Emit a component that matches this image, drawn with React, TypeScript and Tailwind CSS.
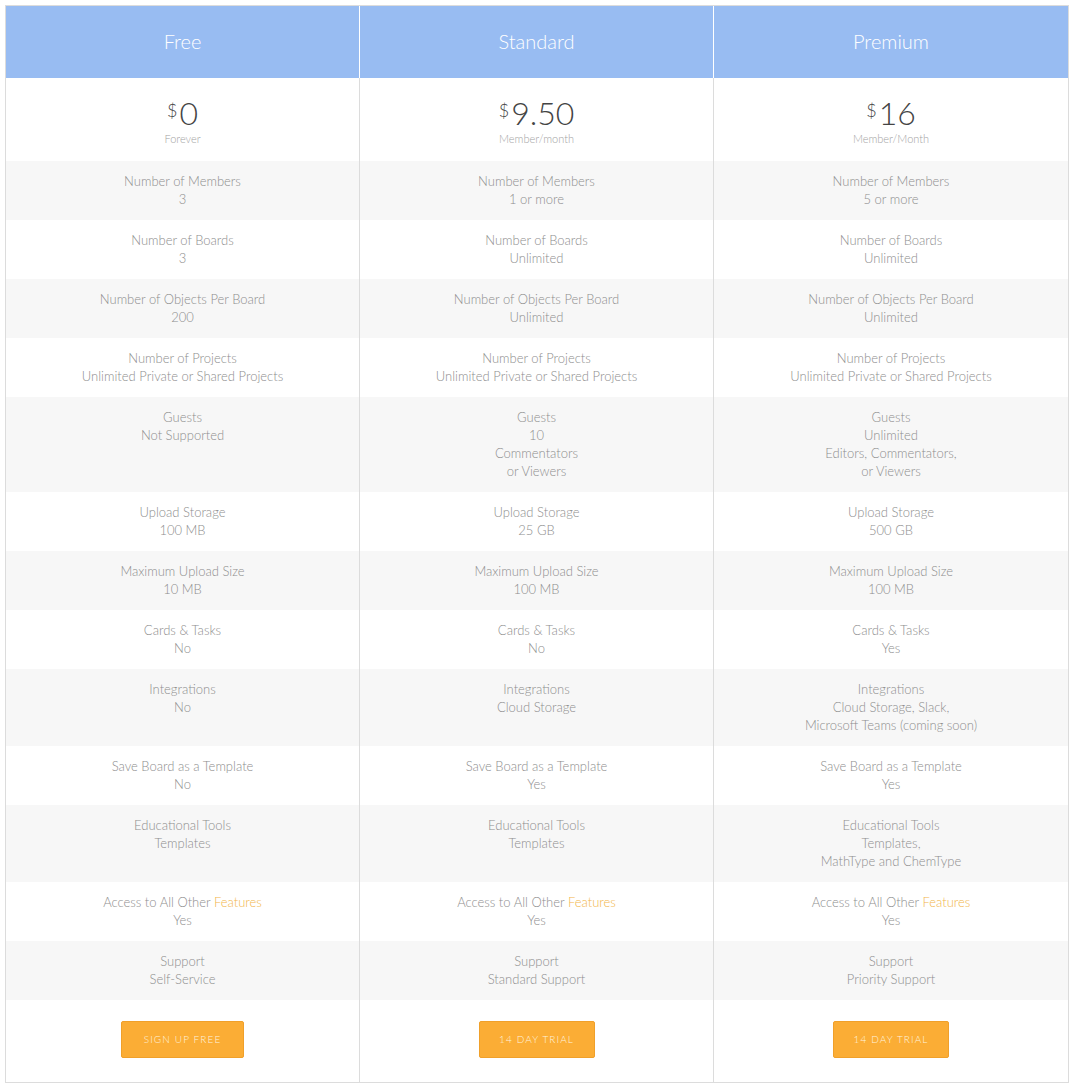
import React from "react";

type Plan = {
  name: string;
  price: string;
  period: string;
  cta: string;
  btnWidth: string;
};

const plans: Plan[] = [
  { name: "Free", price: "0", period: "Forever", cta: "Sign up free", btnWidth: "w-[123px]" },
  { name: "Standard", price: "9.50", period: "Member/month", cta: "14 day trial", btnWidth: "w-[116px]" },
  { name: "Premium", price: "16", period: "Member/Month", cta: "14 day trial", btnWidth: "w-[116px]" },
];

type Row = { label: React.ReactNode; values: string[][] };

const features = (
  <>
    Access to All Other <span className="text-[#f2b64a]">Features</span>
  </>
);

const rows: Row[] = [
  { label: "Number of Members", values: [["3"], ["1 or more"], ["5 or more"]] },
  { label: "Number of Boards", values: [["3"], ["Unlimited"], ["Unlimited"]] },
  { label: "Number of Objects Per Board", values: [["200"], ["Unlimited"], ["Unlimited"]] },
  {
    label: "Number of Projects",
    values: [["Unlimited Private or Shared Projects"], ["Unlimited Private or Shared Projects"], ["Unlimited Private or Shared Projects"]],
  },
  {
    label: "Guests",
    values: [["Not Supported"], ["10", "Commentators", "or Viewers"], ["Unlimited", "Editors, Commentators,", "or Viewers"]],
  },
  { label: "Upload Storage", values: [["100 MB"], ["25 GB"], ["500 GB"]] },
  { label: "Maximum Upload Size", values: [["10 MB"], ["100 MB"], ["100 MB"]] },
  { label: "Cards & Tasks", values: [["No"], ["No"], ["Yes"]] },
  {
    label: "Integrations",
    values: [["No"], ["Cloud Storage"], ["Cloud Storage, Slack,", "Microsoft Teams (coming soon)"]],
  },
  { label: "Save Board as a Template", values: [["No"], ["Yes"], ["Yes"]] },
  {
    label: "Educational Tools",
    values: [["Templates"], ["Templates"], ["Templates,", "MathType and ChemType"]],
  },
  { label: features, values: [["Yes"], ["Yes"], ["Yes"]] },
  { label: "Support", values: [["Self-Service"], ["Standard Support"], ["Priority Support"]] },
];

export default function App() {
  return (
    <div className="min-h-[1086px] bg-white pl-[5px] pt-[5px] font-['Lato','Open_Sans',sans-serif] font-light">
      <div className="w-[1064px] border border-[#dcdcdc] text-[13px] leading-[18px] text-[#8e8e8e]">
        <div className="grid grid-cols-3 bg-[#98bcf2]">
          {plans.map((p, i) => (
            <div
              key={p.name}
              className={`flex h-[72px] items-center justify-center pb-[2px] text-[20px] font-light text-white ${i < 2 ? "border-r border-white" : ""}`}
            >
              {p.name}
            </div>
          ))}
        </div>

        <div className="grid grid-cols-3">
          {plans.map((p, i) => (
            <div
              key={p.name}
              className={`flex h-[83px] flex-col items-center pt-[18px] ${i < 2 ? "border-r border-[#dcdcdc]" : ""}`}
            >
              <div className="flex items-start text-[#444]">
                <span className="mt-[4px] mr-[2px] text-[18px] leading-[20px] font-light">$</span>
                <span className="text-[32px] leading-[34px] font-light">{p.price}</span>
              </div>
              <div className="mt-[2px] text-[11px] leading-[14px] text-[#a3a3a3]">{p.period}</div>
            </div>
          ))}
        </div>

        {rows.map((r, ri) => (
          <div key={ri} className="grid grid-cols-3">
            {r.values.map((v, ci) => (
              <div
                key={ci}
                className={`pt-[11px] pb-[12px] text-center ${ri % 2 === 0 ? "bg-[#f7f7f7]" : "bg-white"} ${ci < 2 ? "border-r border-[#dcdcdc]" : ""}`}
              >
                <div>{r.label}</div>
                {v.map((line, li) => (
                  <div key={li}>{line}</div>
                ))}
              </div>
            ))}
          </div>
        ))}

        <div className="grid grid-cols-3">
          {plans.map((p, i) => (
            <div
              key={p.name}
              className={`flex h-[82px] items-center justify-center pb-[4px] ${i < 2 ? "border-r border-[#dcdcdc]" : ""}`}
            >
              <button
                type="button"
                className={`h-[37px] ${p.btnWidth} rounded-[2px] border border-[#f0a02a] bg-[#fbad35] text-[10px] font-light tracking-[1.1px] text-[#fff3df] uppercase`}
              >
                {p.cta}
              </button>
            </div>
          ))}
        </div>
      </div>
    </div>
  );
}
